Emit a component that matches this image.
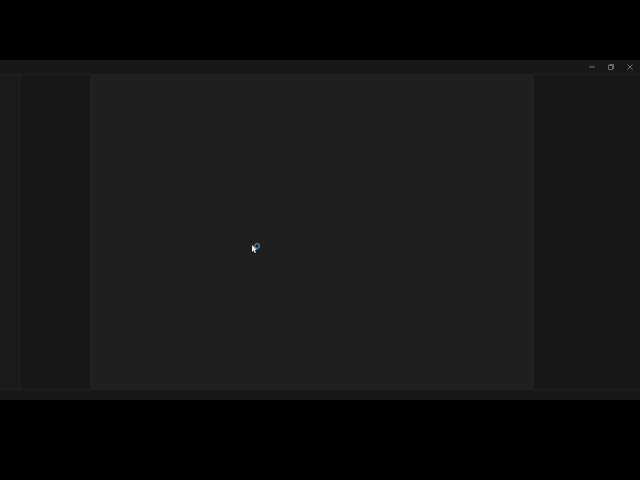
<script>
	// window is letterboxed inside the black capture area
</script>

<div class="screen">
	<div class="window">
		<header class="titlebar">
			<button class="ctl" aria-label="Minimize">
				<svg width="6" height="6" viewBox="0 0 6 6"><path d="M0 3h6" /></svg>
			</button>
			<button class="ctl" aria-label="Restore">
				<svg width="6" height="6" viewBox="0 0 6 6"><path d="M.5 1.5h4v4h-4zM1.5 1.5v-1h4v4h-1" /></svg>
			</button>
			<button class="ctl" aria-label="Close">
				<svg width="6" height="6" viewBox="0 0 6 6"><path d="M.5 .5l5 5M5.5 .5l-5 5" /></svg>
			</button>
		</header>

		<div class="body">
			<nav class="rail"></nav>
			<aside class="sidebar"></aside>
			<main class="content">
				<div class="spinner">
					<svg width="8" height="8" viewBox="0 0 8 8" class="ring">
						<circle cx="4" cy="4" r="2.3" />
					</svg>
					<svg width="6" height="8" viewBox="0 0 6 8" class="arrow">
						<path d="M0 0v7l1.6-1.5L2.8 8l1.2-.6-1.1-2.3H5z" />
					</svg>
				</div>
			</main>
			<aside class="panel"></aside>
		</div>

		<footer class="statusbar"></footer>
	</div>
</div>

<style>
	:global(body) {
		background: #000;
	}

	.screen {
		width: 640px;
		height: 480px;
		padding: 60px 0 80px;
		box-sizing: border-box;
		background: #000;
	}

	.window {
		height: 340px;
		display: flex;
		flex-direction: column;
		background: #181818;
	}

	.titlebar {
		height: 14px;
		flex: none;
		display: flex;
		justify-content: flex-end;
		align-items: center;
		gap: 9px;
		padding-right: 5px;
		background: #181818;
		border-bottom: 1px solid #1f1f1f;
	}

	.ctl {
		width: 10px;
		height: 12px;
		padding: 0;
		border: none;
		background: none;
		display: grid;
		place-items: center;
	}

	.ctl svg {
		fill: none;
		stroke: #6e6e6e;
		stroke-width: 1;
	}

	.body {
		flex: 1;
		display: flex;
		min-height: 0;
	}

	.rail {
		width: 19px;
		flex: none;
		background: #1a1a1a;
		border-right: 1px solid #202020;
	}

	.sidebar {
		width: 70px;
		flex: none;
		background: #181818;
	}

	.content {
		flex: 1;
		position: relative;
		background: #1f1f1f;
		border: 1px solid #212121;
		border-radius: 3px;
	}

	.spinner {
		position: absolute;
		left: 161px;
		top: 166px;
		width: 10px;
		height: 10px;
	}

	.ring {
		position: absolute;
		left: 1px;
		top: 0;
	}

	.ring circle {
		fill: none;
		stroke: #4a86b4;
		stroke-width: 1.3;
	}

	.arrow {
		position: absolute;
		left: 0;
		top: 3px;
		fill: #ececec;
	}

	.panel {
		width: 106px;
		flex: none;
		background: #181818;
	}

	.statusbar {
		height: 10px;
		flex: none;
		background: #181818;
		border-top: 1px solid #1f1f1f;
	}
</style>
